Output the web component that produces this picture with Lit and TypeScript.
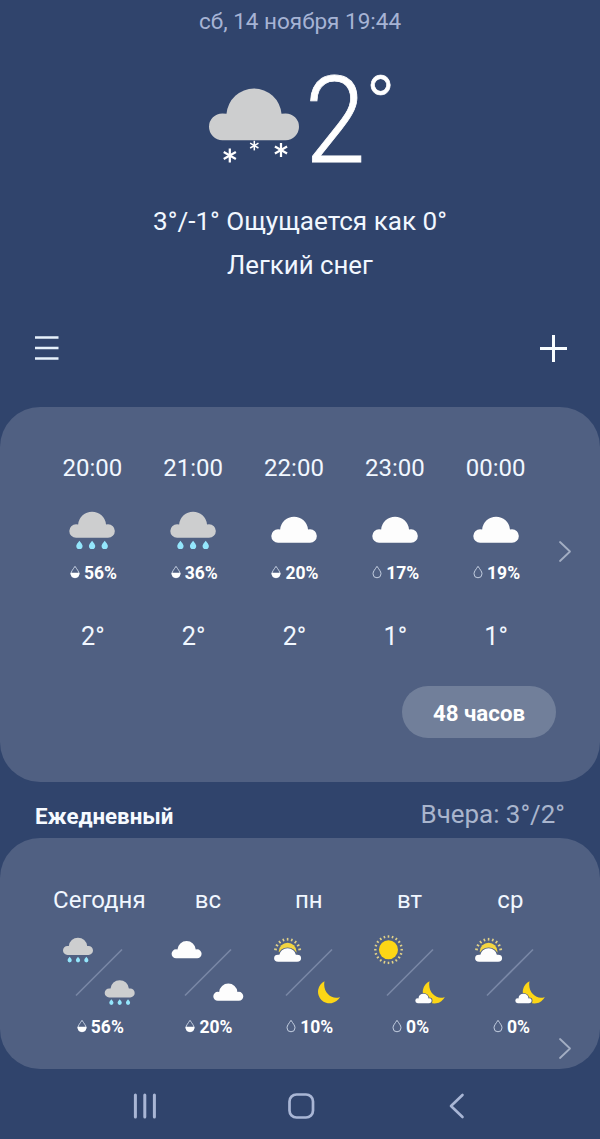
import { LitElement, html, svg, css } from "lit";
import { customElement, property } from "lit/decorators.js";

type Sky = "rain" | "snow" | "cloud" | "sun" | "suncloud" | "moon" | "mooncloud";

const CLOUD = "M17.5 25.8A27.6 27.6 0 0 1 72.5 25.8Q74 25.4 76.6 25.4A13.4 13.4 0 0 1 76.6 52.2H13.4A13.4 13.4 0 0 1 13.4 25.4Q16 25.4 17.5 25.8Z";
const DROP = "M0 0C3 4 6.3 7.4 6.3 10.6A6.3 6.3 0 0 1-6.3 10.6C-6.3 7.4-3 4 0 0Z";
const GREY = "#cdcecf";
const WHITE = "#fdfdfd";
const YELLOW = "#fcd616";
const PANEL = "#506082";

const cloud = (fill: string) => svg`<path d=${CLOUD} fill=${fill}></path>`;

const rainCloud = () => svg`
  ${cloud(GREY)}
  ${[20, 45, 70].map((x) => svg`<path d=${DROP} transform="translate(${x} 58)" fill="#94e6fc"></path>`)}
`;

const flake = (x: number, y: number, r: number) => svg`
  <g transform="translate(${x} ${y})" stroke="#fff" stroke-width=${r * 0.32}>
    ${[0, 60, 120].map((a) => svg`<path d="M0 ${-r}V${r}" transform="rotate(${a})"></path>`)}
  </g>
`;

const rays = (from: number, to: number, step: number, r1: number, r2: number) => {
  const out = [];
  for (let a = from; a <= to; a += step) {
    out.push(svg`<path d="M0 ${-r1}V${-r2}" transform="rotate(${a})" stroke="#e2d288" stroke-width="1.6"></path>`);
  }
  return out;
};

// Small glyphs are drawn around a 30px wide slot.
const smallSky = (sky: Sky) => {
  switch (sky) {
    case "rain":
      return svg`<g transform="scale(.3333)">${rainCloud()}</g>`;
    case "cloud":
      return svg`<g transform="translate(-.4 3.4) scale(.3333)">${cloud(WHITE)}</g>`;
    case "sun":
      return svg`<g transform="translate(14.5 12.2)"><circle r="9.5" fill=${YELLOW}></circle>${rays(0, 342, 18, 12, 14.4)}</g>`;
    case "suncloud":
      return svg`
        <g transform="translate(14.6 14)"><circle r="8.8" fill="#f3d541"></circle>${rays(-80, 80, 20, 10.9, 13.6)}</g>
        <path d=${CLOUD} transform="translate(1.1 10.6) scale(.3 .26)" fill=${WHITE} stroke=${PANEL} stroke-width="6" paint-order="stroke"></path>`;
    case "moon":
      return svg`<path d="M9.8 1.3A11.6 11.6 0 1 0 25.3 16.9C18 20.4 7.5 13 9.8 1.3Z" fill=${YELLOW}></path>`;
    case "mooncloud":
      return svg`
        <g transform="translate(-1.2 0)">
          <path d="M15 1.3A11.6 11.6 0 1 0 30.3 16.9C23 20.4 12.7 13 15 1.3Z" fill=${YELLOW}></path>
          <path d=${CLOUD} transform="translate(.8 13.7) scale(.182)" fill=${WHITE} stroke=${PANEL} stroke-width="9" paint-order="stroke"></path>
        </g>`;
    default:
      return svg``;
  }
};

@customElement("rain-chance")
class RainChance extends LitElement {
  @property({ type: Number }) value = 0;

  static styles = css`
    :host { display: flex; align-items: center; justify-content: center; height: 20px; padding-left: 2px; }
    .drop { display: block; width: 10px; height: 14px; margin: -2px 4px 0 0; }
    .value { font-weight: 700; font-size: 17.5px; line-height: 20px; color: #fff; }
  `;

  render() {
    const wet = this.value >= 20;
    return html`
      <svg class="drop" viewBox="0 0 10 14">
        <path d="M5 1.3C6.8 4.2 9 6.4 9 8.8A4 4 0 0 1 1 8.8C1 6.4 3.2 4.2 5 1.3Z" fill="none" stroke="#c3cee0" stroke-width="1"></path>
        ${wet ? svg`<path d="M.6 7.8H9.4A4.45 4.45 0 1 1 .6 7.8Z" fill="#fff"></path>` : null}
      </svg>
      <span class="value">${this.value}%</span>
    `;
  }
}

@customElement("app-root")
class AppRoot extends LitElement {
  private hours: { time: string; sky: Sky; chance: number; temp: string }[] = [
    { time: "20:00", sky: "rain", chance: 56, temp: "2°" },
    { time: "21:00", sky: "rain", chance: 36, temp: "2°" },
    { time: "22:00", sky: "cloud", chance: 20, temp: "2°" },
    { time: "23:00", sky: "cloud", chance: 17, temp: "1°" },
    { time: "00:00", sky: "cloud", chance: 19, temp: "1°" },
  ];

  private days: { name: string; day: Sky; night: Sky; chance: number }[] = [
    { name: "Сегодня", day: "rain", night: "rain", chance: 56 },
    { name: "вс", day: "cloud", night: "cloud", chance: 20 },
    { name: "пн", day: "suncloud", night: "moon", chance: 10 },
    { name: "вт", day: "sun", night: "mooncloud", chance: 0 },
    { name: "ср", day: "suncloud", night: "mooncloud", chance: 0 },
  ];

  static styles = css`
    :host {
      display: flex; flex-direction: column; box-sizing: border-box;
      width: 600px; height: 1139px; overflow: hidden;
      background: #30446c; color: #f1f7ff;
      font-family: Roboto, "Noto Sans", sans-serif; font-size: 24px; line-height: 30px;
    }
    svg { display: block; }
    .date { height: 42px; line-height: 42px; text-align: center; font-size: 22.5px; color: #a6b3d4; }
    .now { display: flex; height: 154px; padding-left: 209px; }
    .now-icon { margin-top: 46px; flex: none; }
    .now-temp { font-size: 121px; line-height: 158px; height: 154px; width: 60.5px; font-weight: 300; color: #fff; margin-left: 4.8px; transform: scaleX(.9); transform-origin: 0 0; -webkit-text-stroke: .8px #fff; }
    .now-degree { font-size: 81px; line-height: 130px; font-weight: 300; color: #fff; -webkit-text-stroke: .6px #fff; }
    .line { height: 44px; line-height: 50px; text-align: center; font-size: 25.8px; }
    .range { font-size: 26.1px; }
    .tools { display: flex; justify-content: space-between; align-items: center; height: 44px; margin-top: 42px; padding: 0 33px 0 35px; }
    .panel { background: #506082; border-radius: 40px; box-sizing: border-box; flex: none; }
    .hourly { height: 375px; margin-top: 37px; padding: 47px 0 0 42px; }
    .hours { display: flex; align-items: center; height: 195px; }
    .hour { width: 100.8px; text-align: center; display: flex; flex-direction: column; align-items: center; }
    .hour-icon { margin: 28px 0 14px; }
    .temp { margin: 39px 0 -1px 1px; font-size: 25.3px; }
    .arrow { margin: -1px 0 0 12px; }
    .more {
      display: block; width: 154px; height: 52px; margin: 37px 44px 0 auto; padding: 0; border: 0; border-radius: 26px;
      background: #717f9a; color: #fff; font: 700 22.3px/54px Roboto, "Noto Sans", sans-serif;
    }
    .heading { display: flex; justify-content: space-between; height: 56px; padding: 0 35px; flex: none; line-height: 65px; }
    .title { font-size: 22.3px; font-weight: 700; line-height: 69px; color: #f6faff; }
    .yesterday { font-size: 25.9px; color: #a9b5cd; }
    .daily { height: 231px; padding: 47px 0 0 41px; }
    .days { display: grid; grid-template-columns: 116.6px repeat(4, 100.8px); }
    .day { display: flex; flex-direction: column; align-items: center; }
    .day-icon { margin: 15px 0 7px; }
    .next { margin: 0 0 0 517px; }
    .nav { display: flex; align-items: center; flex: 1; padding: 4px 0 0 132px; }
    .home { margin: 0 134px 0 129px; }
  `;

  private arrow() {
    return svg`<path d="M2 2L12 11.5L2 21" fill="none" stroke="#a3aec3" stroke-width="1.8" stroke-linecap="round" stroke-linejoin="round"></path>`;
  }

  render() {
    return html`
      <div class="date">сб, 14 ноября 19:44</div>
      <div class="now">
        <svg class="now-icon" width="91" height="80" viewBox="0 0 91 80">
          ${cloud(GREY)} ${flake(20.8, 67.5, 7)} ${flake(45.3, 57.6, 4.8)} ${flake(72, 62, 7)}
        </svg>
        <span class="now-temp">2</span><span class="now-degree">°</span>
      </div>
      <div class="line range">3°/-1° Ощущается как 0°</div>
      <div class="line">Легкий снег</div>
      <div class="tools">
        <svg width="24" height="24" viewBox="0 0 24 24"><path d="M0 1.5H23.5M0 12H23.5M0 22.5H23.5" stroke="#e6f1fb" stroke-width="2.5"></path></svg>
        <svg width="27" height="28" viewBox="0 0 27 28"><path d="M0 14.5H27M13.5 1V28" stroke="#f8fdff" stroke-width="3"></path></svg>
      </div>
      <section class="panel hourly">
        <div class="hours">
          ${this.hours.map((h) => html`
            <div class="hour">
              <span>${h.time}</span>
              <svg class="hour-icon" width="46" height="38" viewBox="0 0 46 38">
                ${h.sky === "rain"
                  ? svg`<g transform="translate(.3 .4) scale(.506)">${rainCloud()}</g>`
                  : svg`<g transform="translate(.3 5.4) scale(.506)">${cloud(WHITE)}</g>`}
              </svg>
              <rain-chance .value=${h.chance}></rain-chance>
              <span class="temp">${h.temp}</span>
            </div>`)}
          <svg class="arrow" width="14" height="23" viewBox="0 0 14 23">${this.arrow()}</svg>
        </div>
        <button class="more">48 часов</button>
      </section>
      <div class="heading">
        <span class="title">Ежедневный</span>
        <span class="yesterday">Вчера: 3°/2°</span>
      </div>
      <section class="panel daily">
        <div class="days">
          ${this.days.map((d) => html`
            <div class="day">
              <span>${d.name}</span>
              <svg class="day-icon" width="100" height="80" viewBox="0 0 100 80">
                <path d="M27 65.5L73 19.5" stroke="#7987a6" stroke-width="1.6"></path>
                <g transform="translate(14 7.5)">${smallSky(d.day)}</g>
                <g transform="translate(55.7 50)">${smallSky(d.night)}</g>
              </svg>
              <rain-chance .value=${d.chance}></rain-chance>
            </div>`)}
        </div>
        <svg class="next" width="14" height="23" viewBox="0 0 14 23">${this.arrow()}</svg>
      </section>
      <nav class="nav">
        <svg width="26" height="26" viewBox="0 0 26 26"><path d="M3.4 2V24M12.8 2V24M22.4 2V24" stroke="#a9b6d5" stroke-width="3" stroke-linecap="round"></path></svg>
        <svg class="home" width="28" height="28" viewBox="0 0 28 28"><rect x="2.5" y="2.5" width="23.5" height="23" rx="7" fill="none" stroke="#a9b6d5" stroke-width="2.7"></rect></svg>
        <svg width="16" height="26" viewBox="0 0 16 26"><path d="M13.5 2L2 13L13.5 24" fill="none" stroke="#a9b6d5" stroke-width="2.6" stroke-linecap="round" stroke-linejoin="round"></path></svg>
      </nav>
    `;
  }
}
